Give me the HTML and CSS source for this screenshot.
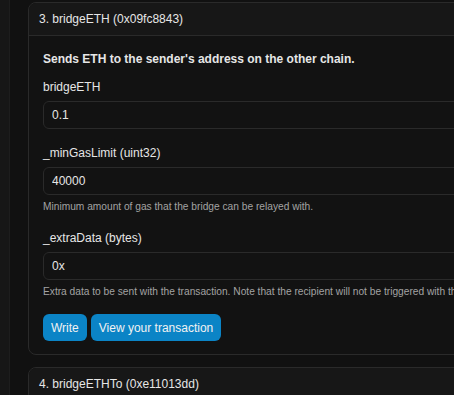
FILE: index.html
```html
<!DOCTYPE html>
<html>
<head>
    <link rel="stylesheet" href="styles.css">
</head>
<body>
    <div class="layout">
        <div class="sidebar"></div>
        <div class="main">
            <div class="card">
                <div class="card-header">3. bridgeETH (0x09fc8843)</div>
                <div class="card-body">
                    <p class="desc">Sends ETH to the sender's address on the other chain.</p>
                    <div class="field first">
                        <label>bridgeETH</label>
                        <input type="text" value="0.1">
                    </div>
                    <div class="field">
                        <label>_minGasLimit (uint32)</label>
                        <input type="text" value="40000">
                        <p class="help">Minimum amount of gas that the bridge can be relayed with.</p>
                    </div>
                    <div class="field">
                        <label>_extraData (bytes)</label>
                        <input type="text" value="0x">
                        <p class="help">Extra data to be sent with the transaction. Note that the recipient will not be triggered with this ETH transfer.</p>
                    </div>
                    <div class="actions">
                        <button>Write</button>
                        <button>View your transaction</button>
                    </div>
                </div>
            </div>
            <div class="card">
                <div class="card-header">4. bridgeETHTo (0xe11013dd)</div>
            </div>
        </div>
    </div>
</body>
</html>
```

FILE: styles.css
```css
* {
    box-sizing: border-box;
    margin: 0;
    padding: 0;
}

body {
    font-family: "Liberation Sans", Arial, sans-serif;
    background-color: #111111;
    color: #e6e6e6;
    overflow: hidden;
}

.layout {
    display: flex;
    min-height: 395px;
}

.sidebar {
    width: 10px;
    flex-shrink: 0;
    background-color: #161616;
    border-right: 1px solid #1d1d1d;
}

.main {
    padding: 2px 0 0 18px;
    display: flex;
    flex-direction: column;
    gap: 12px;
}

.card {
    width: 640px;
    border: 1px solid #2a2a2a;
    border-radius: 8px;
    background-color: #121212;
    overflow: hidden;
}

.card-header {
    height: 33px;
    line-height: 33px;
    padding: 0 10px;
    font-size: 12px;
    background-color: #171717;
    border-bottom: 1px solid #2a2a2a;
}

.card-body {
    padding: 15px 14px 13px;
}

.desc {
    font-size: 12px;
    font-weight: bold;
    line-height: 16px;
}

.field {
    margin-top: 16px;
}

.field.first {
    margin-top: 12px;
}

.field label {
    display: block;
    font-size: 12px;
    line-height: 16px;
    margin-bottom: 6px;
}

.field input {
    display: block;
    width: 100%;
    height: 28px;
    padding: 0 8px;
    background-color: #121212;
    border: 1px solid #2a2a2a;
    border-radius: 6px;
    color: #e6e6e6;
    font-family: inherit;
    font-size: 12px;
}

.help {
    margin-top: 5px;
    font-size: 10.2px;
    line-height: 14px;
    color: #a3a3a3;
    white-space: nowrap;
}

.actions {
    display: flex;
    gap: 4px;
    margin-top: 15px;
}

.actions button {
    height: 27px;
    padding: 0 8px;
    background-color: #0b84c6;
    color: #f2f2f2;
    border: none;
    border-radius: 6px;
    font-family: inherit;
    font-size: 12px;
}
```
